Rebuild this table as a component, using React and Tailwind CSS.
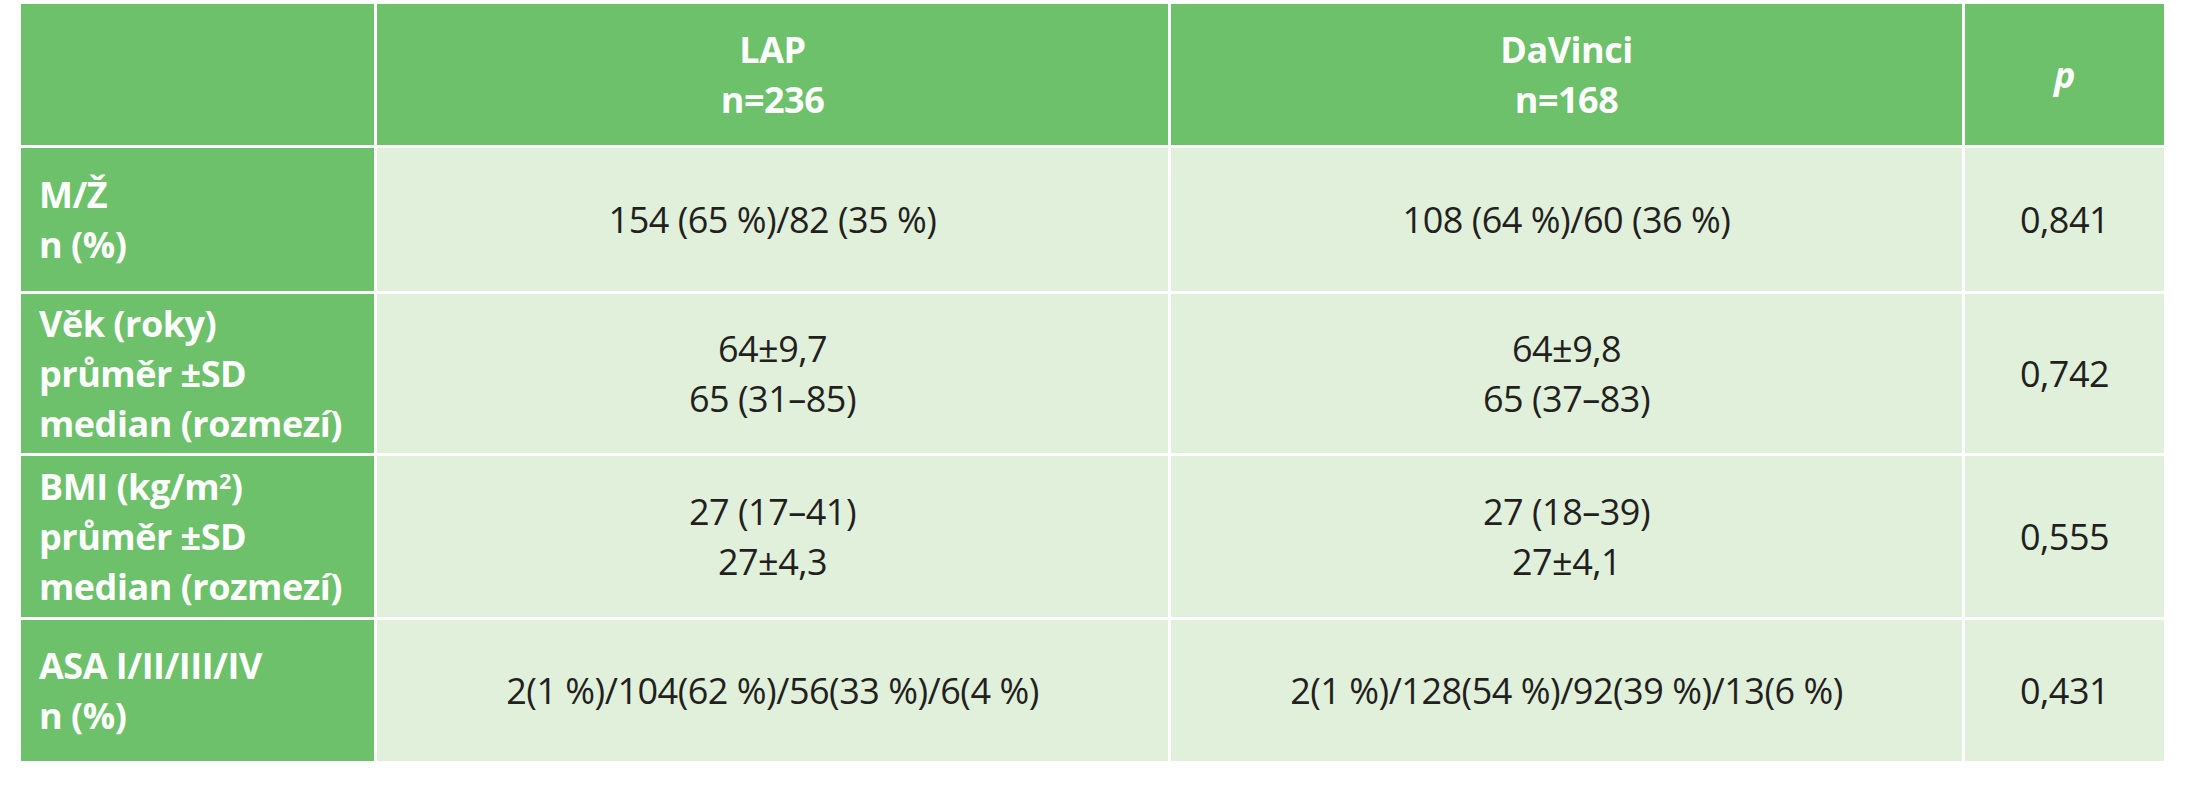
import React from 'react';

// Demographic comparison table, LAP vs DaVinci
const rows = [
  { label: ['M/Ž', 'n (%)'], lap: ['154 (65 %)/82 (35 %)'], dv: ['108 (64 %)/60 (36 %)'], p: '0,841' },
  {
    label: ['Věk (roky)', 'průměr ±SD', 'median (rozmezí)'],
    lap: ['64±9,7', '65 (31–85)'],
    dv: ['64±9,8', '65 (37–83)'],
    p: '0,742',
  },
  {
    label: [<>BMI (kg/m<sup className="text-[0.6em]">2</sup>)</>, 'průměr ±SD', 'median (rozmezí)'],
    lap: ['27 (17–41)', '27±4,3'],
    dv: ['27 (18–39)', '27±4,1'],
    p: '0,555',
  },
  {
    label: ['ASA I/II/III/IV', 'n (%)'],
    lap: ['2(1 %)/104(62 %)/56(33 %)/6(4 %)'],
    dv: ['2(1 %)/128(54 %)/92(39 %)/13(6 %)'],
    p: '0,431',
  },
];

const heights = ['h-[143px]', 'h-[159px]', 'h-[161px]', 'h-[141px]'];

export default function App() {
  return (
    <div
      className="w-[2192px] h-[800px] bg-white pl-[21px] pt-[4px]"
      style={{ fontFamily: '"Open Sans", "Noto Sans", sans-serif' }}
    >
      <div className="grid w-[2143px] grid-cols-[353px_791px_791px_199px] gap-[3px] bg-white text-[36px] leading-[50px] tracking-[-0.5px]">
        {/* header */}
        <div className="h-[141px] bg-[#6cc16a]" />
        <div className="flex h-[141px] flex-col items-center justify-center bg-[#6cc16a] font-bold text-white">
          <span>LAP</span>
          <span>n=236</span>
        </div>
        <div className="flex h-[141px] flex-col items-center justify-center bg-[#6cc16a] font-bold text-white">
          <span>DaVinci</span>
          <span>n=168</span>
        </div>
        <div className="flex h-[141px] items-center justify-center bg-[#6cc16a] font-bold italic text-white">
          p
        </div>

        {rows.map((r, i) => (
          <React.Fragment key={i}>
            <div className={`flex flex-col justify-center bg-[#6cc16a] pl-[18px] font-bold text-white ${heights[i]}`}>
              {r.label.map((l, j) => (
                <span key={j}>{l}</span>
              ))}
            </div>
            <div className={`flex flex-col items-center justify-center bg-[#e0f0da] text-[#231f20] ${heights[i]}`}>
              {r.lap.map((l, j) => (
                <span key={j}>{l}</span>
              ))}
            </div>
            <div className={`flex flex-col items-center justify-center bg-[#e0f0da] text-[#231f20] ${heights[i]}`}>
              {r.dv.map((l, j) => (
                <span key={j}>{l}</span>
              ))}
            </div>
            <div className={`flex items-center justify-center bg-[#e0f0da] text-[#231f20] ${heights[i]}`}>
              {r.p}
            </div>
          </React.Fragment>
        ))}
      </div>
    </div>
  );
}
